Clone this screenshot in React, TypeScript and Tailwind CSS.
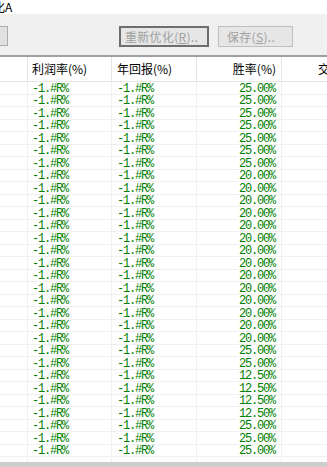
const rates = [
    "25.00%", "25.00%", "25.00%", "25.00%", "25.00%", "25.00%", "25.00%",
    "20.00%", "20.00%", "20.00%", "20.00%", "20.00%", "20.00%", "20.00%",
    "20.00%", "20.00%", "20.00%", "20.00%", "20.00%", "20.00%", "20.00%",
    "25.00%", "25.00%",
    "12.50%", "12.50%", "12.50%", "12.50%",
    "25.00%", "25.00%", "25.00%",
];

const uiFont = { fontFamily: '"Noto Sans CJK SC", "Noto Sans", sans-serif' };
const monoFont = { fontFamily: '"Liberation Mono", "DejaVu Sans Mono", monospace' };

export default function App() {
    return (
        <div className="flex h-[467px] w-[327px] flex-col overflow-hidden bg-white text-black" style={uiFont}>

            {/* ================= TITLE ================= */}
            <div className="flex h-[14px] shrink-0 items-center overflow-hidden bg-white">
                <span className="-ml-[7px] whitespace-nowrap text-[12px] leading-[14px]">化A</span>
            </div>

            {/* ================= TOOLBAR ================= */}
            <div className="flex h-[41px] shrink-0 items-start bg-[#f0f0f0] pt-[12px]">
                <div className="h-[20px] w-[8px] shrink-0 border border-l-0 border-[#adadad] bg-[#e1e1e1]" />
                <div className="ml-[111px] flex h-[21px] w-[90px] shrink-0 items-center border-2 border-[#6e6e6e] bg-[#e6e6e6] pl-[4px]">
                    <span className="whitespace-nowrap text-[12px] leading-none tracking-[0.3px] text-[#a0a0a0]">
                        重新优化(<span className="underline">R</span>)..
                    </span>
                </div>
                <div className="ml-[9px] flex h-[21px] w-[75px] shrink-0 items-center border border-[#bfbfbf] bg-[#e6e6e6] pl-[8px]">
                    <span className="whitespace-nowrap text-[12px] leading-none tracking-[0.3px] text-[#a0a0a0]">
                        保存(<span className="underline">S</span>)..
                    </span>
                </div>
            </div>

            {/* ================= LIST ================= */}
            <div className="h-[2px] shrink-0 bg-[#a0a0a0]" />

            {/* HEADER */}
            <div className="flex h-[25px] shrink-0 border-b border-[#e5e5e5] text-[12px]">
                <div className="w-[28px] shrink-0 border-r border-[#e5e5e5]" />
                <div className="flex w-[84px] shrink-0 items-center border-r border-[#e5e5e5] pl-[4px]">利润率(%)</div>
                <div className="flex w-[85px] shrink-0 items-center border-r border-[#e5e5e5] pl-[5px]">年回报(%)</div>
                <div className="flex w-[85px] shrink-0 items-center justify-end border-r border-[#e5e5e5] pr-[5px]">胜率(%)</div>
                <div className="flex min-w-0 flex-1 items-center overflow-hidden whitespace-nowrap pl-[36px]">交易</div>
            </div>

            {/* ROWS */}
            {rates.map((rate, index) => (
                <div
                    key={index}
                    className={`flex shrink-0 border-b border-[#f0f0f0] text-[12px] tracking-[-1.2px] text-[#008000] ${
                        index % 2 === 0 ? "h-[13px]" : "h-[12px]"
                    }`}
                    style={monoFont}
                >
                    <div className="w-[28px] shrink-0 border-r border-[#f0f0f0]" />
                    <div className="flex w-[84px] shrink-0 items-center border-r border-[#f0f0f0] pl-[4px] pt-[1px]">-1.#R%</div>
                    <div className="flex w-[85px] shrink-0 items-center border-r border-[#f0f0f0] pl-[5px] pt-[1px]">-1.#R%</div>
                    <div className="flex w-[85px] shrink-0 items-center justify-end border-r border-[#f0f0f0] pr-[6px] pt-[1px]">{rate}</div>
                    <div className="flex-1" />
                </div>
            ))}

            {/* FILL */}
            <div className="flex flex-1">
                <div className="w-[28px] shrink-0 border-r border-[#f0f0f0]" />
                <div className="w-[84px] shrink-0 border-r border-[#f0f0f0]" />
                <div className="w-[85px] shrink-0 border-r border-[#f0f0f0]" />
                <div className="w-[85px] shrink-0 border-r border-[#f0f0f0]" />
                <div className="flex-1" />
            </div>

            {/* SCROLLBAR */}
            <div className="h-[5px] shrink-0 bg-[#cdcdcd]" />
        </div>
    );
}
